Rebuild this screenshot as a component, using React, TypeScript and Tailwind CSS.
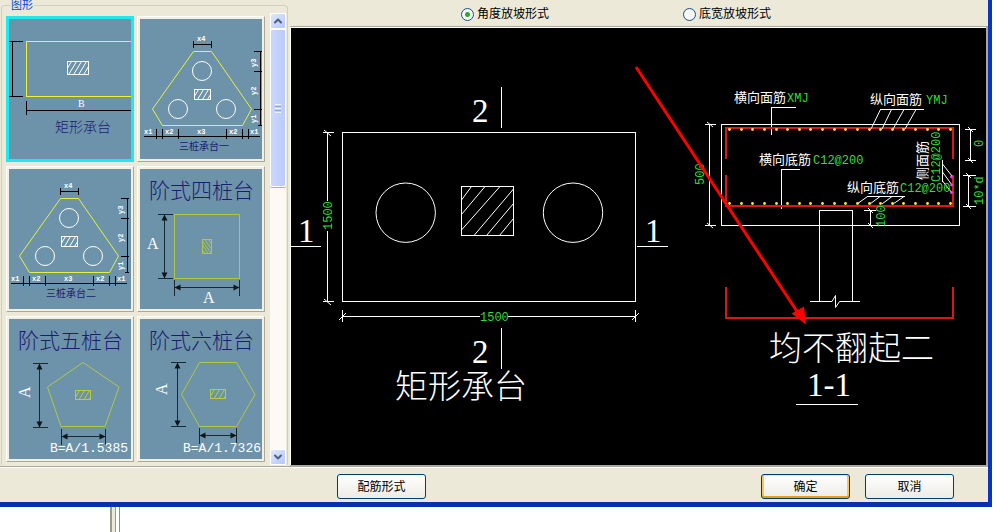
import { useState } from 'react'
import type { ReactNode } from 'react'
import { ChevronDown, ChevronUp } from 'lucide-react'

const barDots = Array.from({ length: 20 }, (_, i) => 729.5 + Math.round(i * 11.63))

interface HatchProps {
  x: number
  y: number
  width: number
  height: number
  id: string
}

// Small hatched column symbol used in the thumbnails
function Hatch({ x, y, width, height, id }: HatchProps) {
  const lines = []
  for (let s = 4; s < width + height; s += 5) lines.push(s)
  return (
    <g>
      <clipPath id={id}>
        <rect x={x} y={y} width={width} height={height} />
      </clipPath>
      <rect x={x} y={y} width={width} height={height} />
      <g clipPath={`url(#${id})`}>
        {lines.map((s) => (
          <line key={s} x1={x + s} y1={y} x2={x + s - height * 0.6} y2={y + height} />
        ))}
      </g>
    </g>
  )
}

function Thumb({ children }: { children: ReactNode }) {
  return (
    <svg viewBox="0 0 122 140" className="block h-[140px] w-[122px] bg-[#6d93ab]" fill="none">
      {children}
    </svg>
  )
}

function RectThumb() {
  return (
    <Thumb>
      <g shapeRendering="crispEdges">
        <path d="M123 22.5H17.5V77.5H123" stroke="#f2f230" />
        <path d="M3.5 22V77M0 22.5H14M0 77.5H14M17.5 82V96M17.5 91.5H122" stroke="#000" />
      </g>
      <g stroke="#fff">
        <Hatch x={58.5} y={42.5} width={21} height={13} id="hatch-rect" />
      </g>
      <text x="69" y="88" className="fill-white font-['Liberation_Serif',serif] text-[10px]">B</text>
      <text x="46" y="113" className="fill-[#1c1c70] font-['Noto_Sans_CJK_SC',sans-serif] text-[14px] font-light">矩形承台</text>
    </Thumb>
  )
}

function TriangleThumb({ title, id, shift }: { title: string; id: string; shift?: string }) {
  const label = "fill-white font-['Liberation_Mono',monospace] text-[7px] font-bold"
  return (
    <Thumb>
      <g transform={shift}>
        <path d="M53.5 32.5H71.5L111.5 90L102.5 106.5H22.5L12.5 90Z" stroke="#e6f23c" />
        <g shapeRendering="crispEdges" stroke="#000">
          <path d="M53.5 25.5H71.5M53.5 22V29M71.5 22V29" />
          <path d="M120.5 32V107M114 32.5H122M114 52.5H122M114 90.5H122M118 106.5H122" />
          <path d="M4 117.5H120M16.5 110V120M22.5 110V120M38.5 110V120M86.5 110V120M102.5 110V120M108.5 110V120" />
        </g>
        <g stroke="#fff">
          <circle cx="62" cy="52" r="9.5" />
          <circle cx="38" cy="90" r="9.5" />
          <circle cx="86" cy="90" r="9.5" />
          <Hatch x={54.5} y={70.5} width={16} height={10} id={id} />
        </g>
        <text x="57" y="22" className={label}>x4</text>
        <text x="4" y="115" className={label}>x1</text>
        <text x="25" y="115" className={label}>x2</text>
        <text x="57" y="115" className={label}>x3</text>
        <text x="89" y="115" className={label}>x2</text>
        <text x="110" y="115" className={label}>x1</text>
        <text transform="translate(116 48) rotate(-90)" className={label}>y3</text>
        <text transform="translate(116 76) rotate(-90)" className={label}>y2</text>
        <text transform="translate(116 104) rotate(-90)" className={label}>y1</text>
        <text x="39" y="131" className="fill-[#1c1c70] font-['Noto_Sans_CJK_SC',sans-serif] text-[10px]">{title}</text>
      </g>
    </Thumb>
  )
}

interface StepThumbProps {
  title: string
  outline: string
  dimX: number
  top: number
  bottom: number
  left: number
  right: number
  dimY: number
  children: ReactNode
}

function StepThumb({ title, outline, dimX, top, bottom, left, right, dimY, children }: StepThumbProps) {
  return (
    <Thumb>
      <text x="9" y="29" className="fill-[#1c1c70] font-['Noto_Sans_CJK_SC',sans-serif] text-[21px] font-light">{title}</text>
      <path d={outline} stroke="#b0c840" />
      <g shapeRendering="crispEdges" stroke="#1a2a30">
        <path d={`M${dimX - 7} ${top}H${dimX + 8}M${dimX - 7} ${bottom}H${dimX + 8}M${dimX} ${top}V${bottom}`} />
        <path d={`M${left} ${dimY - 8}V${dimY + 8}M${right} ${dimY - 8}V${dimY + 8}M${left} ${dimY}H${right}`} />
      </g>
      <g fill="#0c1518">
        <path d={`M${dimX} ${top}l-3 6h6zM${dimX} ${bottom}l-3 -6h6z`} />
        <path d={`M${left} ${dimY}l6 -3v6zM${right} ${dimY}l-6 -3v6z`} />
      </g>
      {children}
    </Thumb>
  )
}

const sideLabel = "fill-white font-['Liberation_Serif',serif] text-[16px]"
const ratioLabel = "fill-white font-['Liberation_Mono',monospace] text-[13px]"

const shapes = [
  { name: '矩形承台', drawing: <RectThumb /> },
  { name: '三桩承台一', drawing: <TriangleThumb title="三桩承台一" id="hatch-tri-1" /> },
  { name: '三桩承台二', drawing: <TriangleThumb title="三桩承台二" id="hatch-tri-2" shift="translate(-2 -3)" /> },
  {
    name: '阶式四桩台',
    drawing: (
      <StepThumb title="阶式四桩台" outline="M34.5 45.5H99.5V109.5H34.5Z" dimX={24.5} top={45.5} bottom={109.5} left={34.5} right={99.5} dimY={118.5}>
        <g stroke="#b0c840">
          <rect x="62.5" y="70.5" width="9" height="14" />
          <path d="M62.5 72L71 84M65 71L71.5 80M69 71L71.5 75M62.5 76L68 84M62.5 81L65 84" />
        </g>
        <text x="7" y="80" className={sideLabel}>A</text>
        <text x="63" y="134" className={sideLabel}>A</text>
      </StepThumb>
    ),
  },
  {
    name: '阶式五桩台',
    drawing: (
      <StepThumb title="阶式五桩台" outline="M74 43.5L110 68L96 107.5H52L38.5 68Z" dimX={30.5} top={44.5} bottom={108.5} left={52.5} right={96.5} dimY={117.5}>
        <g stroke="#b8cc38">
          <Hatch x={66.5} y={71.5} width={15} height={9} id="hatch-five" />
        </g>
        <text transform="translate(21 79) rotate(-90)" className={sideLabel}>A</text>
        <text x="41" y="133" className={ratioLabel}>B=A/1.5385</text>
      </StepThumb>
    ),
  },
  {
    name: '阶式六桩台',
    drawing: (
      <StepThumb title="阶式六桩台" outline="M59.5 43.5H96.5L115 75.5L96.5 107.5H59.5L41.5 75.5Z" dimX={37.5} top={43.5} bottom={107.5} left={59.5} right={96.5} dimY={116.5}>
        <g stroke="#b8cc38">
          <Hatch x={70.5} y={70.5} width={15} height={9} id="hatch-six" />
        </g>
        <text transform="translate(27 76) rotate(-90)" className={sideLabel}>A</text>
        <text x="43" y="133" className={ratioLabel}>B=A/1.7326</text>
      </StepThumb>
    ),
  },
]

const cadLabel = "fill-white font-['Noto_Sans_CJK_SC',sans-serif] text-[13px]"
const cadValue = "fill-[#2fdc3c] font-['Liberation_Mono',monospace] text-[12px]"
const cadMark = "fill-white font-['Liberation_Serif',serif] text-[33px]"
const cadTitle = "fill-white font-['Noto_Sans_CJK_SC',sans-serif] text-[33px] font-light"

function PlanView() {
  return (
    <g>
      <g stroke="#fff" shapeRendering="crispEdges">
        <rect x="342.5" y="132.5" width="293" height="169" />
        <rect x="461.5" y="186.5" width="52" height="49" />
        <path d="M501.5 87V128M501.5 328V369M291 246.5H321M637 246.5H668" />
        <path d="M327.5 132V201M327.5 231V302M323 132.5H334M323 301.5H334" />
        <path d="M342 316.5H480M508 316.5H636M342.5 310V322M635.5 310V322" />
      </g>
      <g stroke="#fff">
        <circle cx="405.7" cy="212.7" r="29.7" />
        <circle cx="573" cy="212.7" r="29.7" />
        <path d="M471.5 186.5L461.5 200M485 186.5L461.5 214.5M500 186.5L461.5 230M513.5 189L474 235.5M513.5 203.5L486.5 235.5M513.5 218.5L499.5 235.5" />
        <path d="M324 130L331 136M324 299L331 305M339 320L346 313M632 320L639 313" />
      </g>
      <text x="472" y="122" className={cadMark}>2</text>
      <text x="472" y="363" className={cadMark}>2</text>
      <text x="298" y="242" className={cadMark}>1</text>
      <text x="645" y="242" className={cadMark}>1</text>
      <text transform="translate(332 230) rotate(-90)" className={cadValue}>1500</text>
      <text x="480" y="321" className={cadValue}>1500</text>
      <text x="395" y="398" className={cadTitle}>矩形承台</text>
    </g>
  )
}

function SectionView() {
  return (
    <g>
      <g stroke="#fff" shapeRendering="crispEdges">
        <rect x="721.5" y="124.5" width="238" height="101" />
        <path d="M819.5 301V210.5H852.5V301" />
        <path d="M709.5 124V226M705 124.5H716M705 225.5H716" />
        <path d="M970.5 129V161M965 129.5H976M965 160.5H976" />
        <path d="M968.5 175V207M963 175.5H976M963 206.5H976" />
        <path d="M870.5 210V226M864 210.5H876M866 225.5H876" />
        <path d="M796 107.5H771.5V135M800 169.5H781.5V209M880 109.5H924M867 196.5H905M942.5 160V182M796 404.5H858" />
      </g>
      <g stroke="#d81818" strokeWidth="2" shapeRendering="crispEdges">
        <path d="M726 159V128H953V159M726 175V206H953V175M726 287V318H953V287" />
      </g>
      <g stroke="#fff">
        <path d="M810 301.5H832L835.5 295.5V307.5L839.5 301.5H860" />
        <path d="M880.5 109.5L871 129M891.5 109.5L882 129M904 109.5L893 129M916 109.5L905 129" />
        <path d="M867.5 196.5L857 204M880 196.5L870 204M892 196.5L882 204M904 196.5L893 204" />
        <path d="M942.5 164L952 176M942.5 172L952 185M942.5 181L952 193" />
        <path d="M707 122L713 127M707 223L713 228M968 127L973 132M968 158L973 163M966 173L971 178M966 204L971 209M868 208L873 213M868 223L873 228" />
      </g>
      {barDots.map((x) => (
        <g key={x} fill="#ffe94a">
          <circle cx={x} cy="129.5" r="1.4" />
          <circle cx={x} cy="203.5" r="1.4" />
        </g>
      ))}
      <g fill="#ff3cf0">
        <circle cx="951.5" cy="177" r="1.4" />
        <circle cx="951.5" cy="185" r="1.4" />
        <circle cx="951.5" cy="192.5" r="1.4" />
      </g>
      <text x="734" y="102" className={cadLabel}>横向面筋</text>
      <text x="787" y="102" className={cadValue}>XMJ</text>
      <text x="870" y="104" className={cadLabel}>纵向面筋</text>
      <text x="926" y="104" className={cadValue}>YMJ</text>
      <text x="759" y="164" className={cadLabel}>横向底筋</text>
      <text x="813" y="164" className={cadValue}>C12@200</text>
      <text x="847" y="192" className={cadLabel}>纵向底筋</text>
      <text x="900" y="192" className={cadValue}>C12@200</text>
      <text transform="translate(927 180) rotate(-90)" className={cadLabel}>侧面筋</text>
      <text transform="translate(940 182) rotate(-90)" className={cadValue}>C12@200</text>
      <text transform="translate(704 185) rotate(-90)" className={cadValue}>500</text>
      <text transform="translate(983 147) rotate(-90)" className={cadValue}>0</text>
      <text transform="translate(983 205) rotate(-90)" className={cadValue}>10*d</text>
      <text transform="translate(885 227) rotate(-90)" className={cadValue}>100</text>
      <text x="769" y="360" className={cadTitle}>均不翻起二</text>
      <text x="829" y="396" textAnchor="middle" className={cadMark}>1-1</text>
    </g>
  )
}

const buttonBase =
  "h-[25px] w-[89px] rounded-[3px] border border-[#003c74] bg-linear-to-b from-white to-[#ecebe5] text-[12px] leading-none text-black"

const scrollButton =
  'flex h-4 w-4 items-center justify-center rounded-[2px] border border-white bg-linear-to-br from-[#dfe8ff] to-[#b4c8f6] text-[#4d6185]'

export default function App() {
  const [selected, setSelected] = useState('矩形承台')
  const [slope, setSlope] = useState('角度放坡形式')

  return (
    <div className="min-h-screen overflow-hidden bg-white pr-[5px] font-['Liberation_Sans','Noto_Sans_CJK_SC',sans-serif] text-[12px] text-black">
      <div className="border-r-4 border-b-[5px] border-[#0a34c4] border-b-[#0830b0] bg-[#ece9d8]">
        <div className="flex border-b border-white">
          <div className="w-[290px] shrink-0 overflow-hidden border-b border-[#aca899] pr-0.5 pl-px">
            <fieldset className="-mt-px min-w-0 rounded-t-[4px] border border-b-0 border-[#d0d0bf]">
              <legend className="ml-2 px-px text-[11px] leading-[12px] text-[#0046d5]">图形</legend>
              <div className="flex justify-between pt-0.5 pr-px pl-1">
                <div className="grid grid-cols-2 gap-x-[3px] gap-y-1 pt-[3px] pb-[3px]">
                  {shapes.map((shape) => (
                    <button
                      key={shape.name}
                      type="button"
                      aria-label={shape.name}
                      onClick={() => setSelected(shape.name)}
                      className={
                        shape.name === selected
                          ? 'border-[3px] border-[#1ee8f0]'
                          : 'border border-t-white border-r-[#aca899] border-b-[#aca899] border-l-white bg-[#f3f0e2] p-0.5'
                      }
                    >
                      {shape.drawing}
                    </button>
                  ))}
                </div>
                <div className="flex w-4 flex-col bg-[#fbfaf4]">
                  <button type="button" aria-label="向上滚动" className={scrollButton}>
                    <ChevronUp size={12} strokeWidth={4} />
                  </button>
                  <div className="flex h-[158px] flex-col items-center justify-center gap-px rounded-[2px] border border-white bg-linear-to-r from-[#cad8fd] to-[#b9cbf8] shadow-[0_1px_0_#9cb0dc]">
                    <span className="h-px w-1.5 bg-[#eef3ff]" />
                    <span className="h-px w-1.5 bg-[#8ca4dc]" />
                    <span className="h-px w-1.5 bg-[#eef3ff]" />
                    <span className="h-px w-1.5 bg-[#8ca4dc]" />
                    <span className="h-px w-1.5 bg-[#eef3ff]" />
                  </div>
                  <button type="button" aria-label="向下滚动" className={`${scrollButton} mt-auto`}>
                    <ChevronDown size={12} strokeWidth={4} />
                  </button>
                </div>
              </div>
            </fieldset>
          </div>

          <div className="flex min-w-0 flex-1 flex-col">
            <div className="flex h-[26px] items-center gap-[134px] pt-0.5 pl-[171px]">
              {['角度放坡形式', '底宽放坡形式'].map((name) => (
                <label key={name} className="flex items-center gap-[3px] whitespace-nowrap leading-none">
                  <input
                    type="radio"
                    name="slope"
                    checked={slope === name}
                    onChange={() => setSlope(name)}
                    className="h-[13px] w-[13px] appearance-none rounded-full border border-[#1c5180] bg-[#f6f6f2] checked:bg-[radial-gradient(circle,#2fa82f_0_2px,#f6f6f2_3px)]"
                  />
                  {name}
                </label>
              ))}
            </div>
            <div className="border-t border-r-2 border-b-2 border-[#aca899]">
              <div className="border-t border-l border-white bg-black">
                <svg viewBox="291 28 695 437" className="block h-[437px] w-full" fill="none">
                  <PlanView />
                  <SectionView />
                  <line x1="636" y1="67" x2="798" y2="313" stroke="#f00" strokeWidth="3" />
                  <path d="M791.5 313.5L804 306.5L806 324.5Z" fill="#f00" />
                </svg>
              </div>
            </div>
          </div>
        </div>

        <div className="flex gap-[15px] pt-1.5 pr-[34px] pb-[3px] pl-[337px]">
          <button type="button" className={buttonBase}>配筋形式</button>
          <button type="button" className={`${buttonBase} ml-auto shadow-[inset_0_-2px_0_#e5a01a,inset_2px_0_0_#f6c56a,inset_-2px_0_0_#f6c56a,inset_0_1px_0_#fde3a8]`}>
            确定
          </button>
          <button type="button" className={buttonBase}>取消</button>
        </div>
      </div>

      <div className="flex h-[25px] pl-[110px]">
        <div className="w-[6px] border-r border-l-2 border-[#9a9a90] bg-[#ece9d8]" />
        <div className="ml-[3px] w-px bg-[#7f8fa8]" />
      </div>
    </div>
  )
}
